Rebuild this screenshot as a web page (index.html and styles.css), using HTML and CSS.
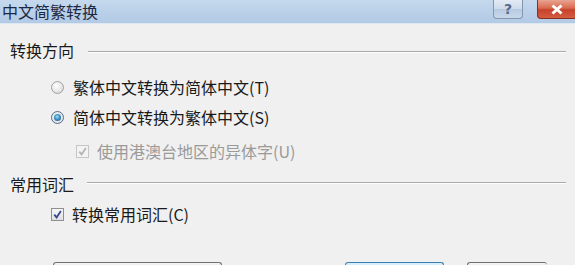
FILE: index.html
```html
<!DOCTYPE html>
<html lang="zh-CN">
<head>
<meta charset="utf-8">
<title>中文简繁转换</title>
<link rel="stylesheet" href="styles.css">
</head>
<body>
<div class="window">
  <div class="titlebar">
    <span class="title">中文简繁转换</span>
    <div class="caption-buttons">
      <span class="cap-btn help">?</span>
      <span class="cap-btn close">
        <svg width="14" height="11" viewBox="0 0 14 11"><path d="M2.5 1.5 L11.5 9.5 M11.5 1.5 L2.5 9.5" stroke="#fff" stroke-width="3"/></svg>
      </span>
    </div>
  </div>
  <div class="content">
    <div class="group-header">
      <span class="group-title">转换方向</span>
      <span class="rule"></span>
    </div>
    <div class="option radio-row first">
      <span class="radio"></span>
      <span class="label">繁体中文转换为简体中文(T)</span>
    </div>
    <div class="option radio-row">
      <span class="radio checked"><span class="dot"></span></span>
      <span class="label">简体中文转换为繁体中文(S)</span>
    </div>
    <div class="option check-row sub disabled">
      <span class="check">
        <svg width="9" height="9" viewBox="0 0 9 9"><path d="M1.3 4.6 L3.6 7.4 L7.9 1.1" fill="none" stroke="#b4b4b4" stroke-width="1.8"/></svg>
      </span>
      <span class="label">使用港澳台地区的异体字(U)</span>
    </div>
    <div class="group-header second">
      <span class="group-title">常用词汇</span>
      <span class="rule"></span>
    </div>
    <div class="option check-row">
      <span class="check">
        <svg width="9" height="9" viewBox="0 0 9 9"><path d="M1.3 4.6 L3.6 7.4 L7.9 1.1" fill="none" stroke="#34498f" stroke-width="1.8"/></svg>
      </span>
      <span class="label">转换常用词汇(C)</span>
    </div>
    <div class="buttons">
      <span class="btn wide"></span>
      <span class="btn default"></span>
      <span class="btn last"></span>
    </div>
  </div>
</div>
</body>
</html>
```
FILE: styles.css
```css
html, body {
  margin: 0;
  padding: 0;
  width: 575px;
  height: 265px;
  overflow: hidden;
  background: #f0f0f0;
  font-family: "Noto Sans CJK SC", "Noto Sans", sans-serif;
}

.window {
  width: 575px;
  height: 265px;
  overflow: hidden;
  display: flex;
  flex-direction: column;
}

.titlebar {
  height: 24px;
  flex: none;
  display: flex;
  align-items: flex-start;
  justify-content: space-between;
  background: linear-gradient(#c5d8ed, #b9cfe8 60%, #b3cae5);
  border-bottom: 1px solid #dfe8f2;
  box-sizing: border-box;
}

.title {
  font-size: 16px;
  line-height: 22px;
  color: #1b2a44;
  padding-left: 2px;
}

.caption-buttons {
  display: flex;
  gap: 14px;
}

.cap-btn {
  height: 19px;
  box-sizing: border-box;
  display: flex;
  align-items: center;
  justify-content: center;
  border-radius: 0 0 4px 4px;
}

.help {
  width: 30px;
  background: linear-gradient(#e3ebf5, #cddaea 50%, #b7cae1 51%, #c8d8ea);
  border: 1px solid #8396b2;
  border-top: none;
  color: #56698a;
  font-family: "DejaVu Sans", sans-serif;
  font-weight: bold;
  font-size: 14px;
  line-height: 17px;
}

.close {
  width: 38px;
  background: linear-gradient(#e8a491, #d9694f 45%, #c6432b 55%, #d45c40);
  border: 1px solid #8a2e20;
  border-right: none;
  border-top: none;
  border-radius: 0 0 0 4px;
}

.content {
  padding-top: 11px;
  display: flex;
  flex-direction: column;
}

.group-header {
  height: 30px;
  display: flex;
  align-items: center;
  padding-left: 10px;
  padding-right: 9px;
}

.group-header.second {
  margin-top: 3px;
}

.group-title {
  font-size: 16px;
  color: #1a1a1a;
  line-height: 30px;
  margin-right: 14px;
  flex: none;
}

.group-header.second .group-title {
  margin-right: 13px;
}

.rule {
  flex: 1;
  height: 1px;
  background: #a9a9a9;
  border-bottom: 1px solid #ffffff;
  margin-top: 3px;
}

.group-header.second .rule {
  margin-top: -3px;
}

.option {
  height: 30px;
  display: flex;
  align-items: center;
  padding-left: 51px;
}

.option.first {
  margin-top: 7px;
}

.label {
  font-size: 16px;
  color: #1a1a1a;
  line-height: 30px;
}

.radio {
  width: 13px;
  height: 13px;
  border-radius: 50%;
  box-sizing: border-box;
  border: 1px solid #a2a2a2;
  background: radial-gradient(circle at 40% 35%, #ffffff, #e2e2e2 65%, #cdcdcd);
  margin-right: 9px;
  flex: none;
  display: flex;
  align-items: center;
  justify-content: center;
}

.radio.checked {
  border-color: #5c6d82;
  background: radial-gradient(circle at 45% 40%, #f4f6f8, #d6dde4);
}

.dot {
  width: 7px;
  height: 7px;
  border-radius: 50%;
  background: radial-gradient(circle at 45% 40%, #a9dcf5 0, #3b92c3 45%, #1a4f7d 100%);
}

.check {
  width: 13px;
  height: 13px;
  box-sizing: border-box;
  border: 1px solid #8e8f8f;
  background: linear-gradient(#f6f6f6, #e0e0e0);
  display: flex;
  align-items: center;
  justify-content: center;
  margin-right: 8px;
  flex: none;
}

.check-row.sub {
  padding-left: 76px;
  margin-top: 4px;
}

.check-row.sub .check {
  margin-right: 8px;
}

.disabled .check {
  border-color: #c6c6c6;
  background: #f3f3f3;
}

.disabled .label {
  color: #9a9a9a;
}

.buttons {
  margin-top: 33px;
  display: flex;
  height: 3px;
  padding-left: 53px;
}

.btn {
  height: 3px;
  box-sizing: border-box;
  border: 1px solid #707070;
  border-bottom: none;
  border-radius: 3px 3px 0 0;
  background: linear-gradient(#f6f6f6, #ececec);
}

.btn.wide {
  width: 169px;
}

.btn.default {
  width: 99px;
  margin-left: 123px;
  border-color: #3c7fb1;
  background: #d6eefb;
}

.btn.last {
  width: 80px;
  margin-left: 23px;
  border-right: none;
}
```
